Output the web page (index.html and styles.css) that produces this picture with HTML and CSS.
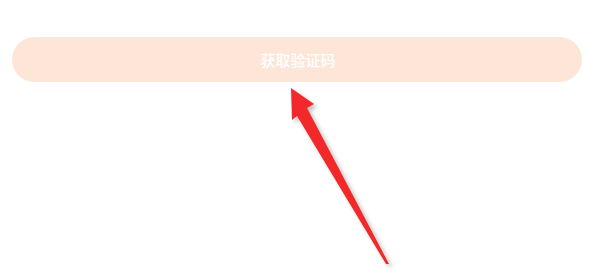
FILE: index.html
```html
<!DOCTYPE html>
<html lang="zh-CN">

<head>
    <meta charset="UTF-8">
    <meta name="viewport" content="width=device-width, initial-scale=1.0">
    <title>获取验证码</title>
    <link rel="stylesheet" href="styles.css">
</head>

<body>
    <div class="main">
        <div class="btnbox">
            <button class="getcode">获取验证码</button>
        </div>
        <!-- red pointer arrow -->
        <svg class="arrow" width="595" height="273" viewBox="0 0 595 273">
            <polygon points="291,88 314,104 307,108 389,264 386,264 297,116 292,120" fill="#f2282b" />
        </svg>
    </div>
</body>

</html>
```

FILE: styles.css
```css
* {
    padding: 0;
    margin: 0;
    box-sizing: border-box;
}

body {
    background: #fff;
    font-family: "Noto Sans CJK SC", "Noto Sans", sans-serif;
}

.main {
    width: 595px;
    height: 273px;
    position: relative;
    overflow: hidden;
}

.btnbox {
    padding: 37px 13px 0 12px;
}

.getcode {
    display: block;
    width: 100%;
    height: 45px;
    border: none;
    border-radius: 23px;
    background-color: #fde6d8;
    color: #fff;
    font-family: inherit;
    font-size: 15px;
    font-weight: 500;
    padding-left: 2px;
}

.arrow {
    position: absolute;
    left: 0;
    top: 0;
    filter: drop-shadow(3px 3px 2px rgba(0, 0, 0, .25));
}
```
